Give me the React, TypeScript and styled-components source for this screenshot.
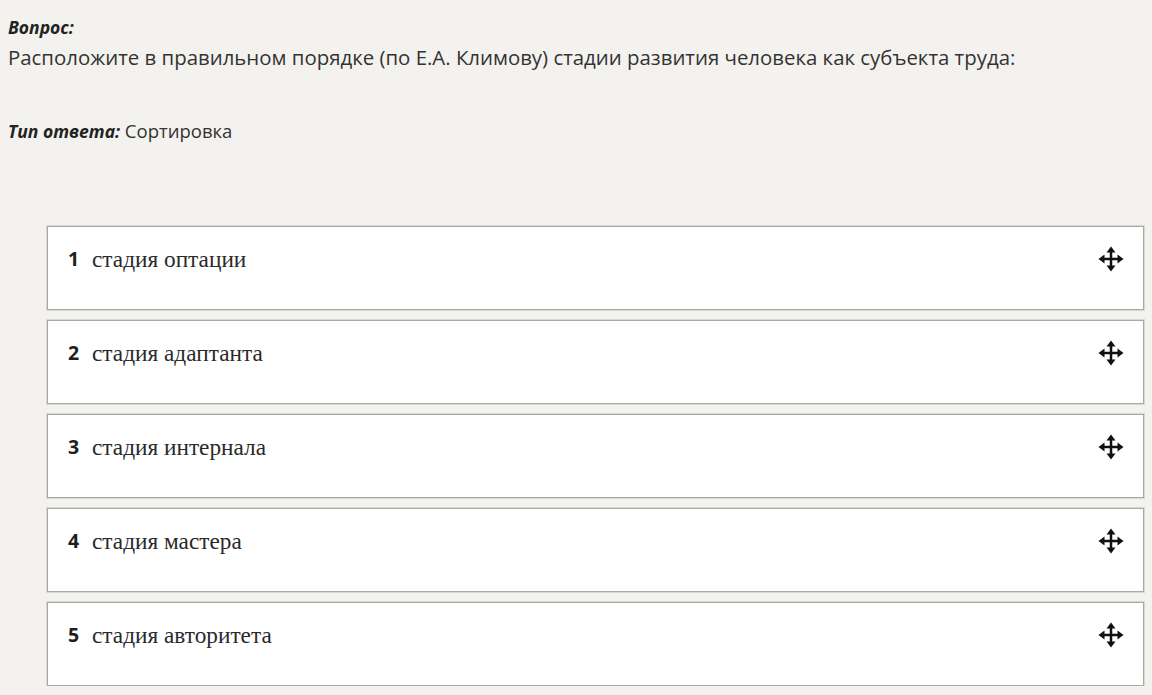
import React from "react";
import styled, { createGlobalStyle } from "styled-components";

const GlobalStyle = createGlobalStyle`
  html, body {
    margin: 0;
    padding: 0;
    background: #f3f2ef;
  }
  body {
    font-family: "Open Sans", "Noto Sans", sans-serif;
    color: #333;
  }
`;

const Page = styled.div`
  padding: 11px 8px 0 8px;
`;

const Label = styled.span`
  font-weight: 700;
  font-style: italic;
  font-size: 17.5px;
  color: #222;
`;

const Line = styled.div`
  font-size: 20.4px;
  line-height: 30px;
`;

const AnswerType = styled.div`
  margin-top: 46px;
  font-size: 18.5px;
  line-height: 26px;
`;

const List = styled.div`
  margin: 82px 0 0 39px;
  display: flex;
  flex-direction: column;
  gap: 10px;
  width: 1097px;
`;

const Item = styled.div`
  display: flex;
  align-items: flex-start;
  height: 84px;
  box-sizing: border-box;
  background: #fff;
  border: 1px solid #a8a8a8;
  box-shadow: 0 0 0 1px #d8d8d8;
  padding: 18px 18px 0 20px;
`;

const Num = styled.span`
  font-weight: 700;
  font-size: 19.5px;
  color: #1e1e1e;
  width: 24px;
`;

const Text = styled.span`
  font-family: "Liberation Serif", "DejaVu Serif", serif;
  font-size: 23.3px;
  color: #2a2a2a;
  flex: 1;
  line-height: 28px;
`;

const Handle = styled.span`
  display: flex;
`;

const MoveIcon = () => (
  <svg width="28" height="28" viewBox="0 0 28 28">
    <g fill="#111">
      <rect x="12.75" y="5" width="2.5" height="18" />
      <rect x="5" y="12.75" width="18" height="2.5" />
      <polygon points="14,1.5 9.5,7.5 18.5,7.5" />
      <polygon points="14,26.5 9.5,20.5 18.5,20.5" />
      <polygon points="1.5,14 7.5,9.5 7.5,18.5" />
      <polygon points="26.5,14 20.5,9.5 20.5,18.5" />
    </g>
  </svg>
);

const stages = [
  "стадия оптации",
  "стадия адаптанта",
  "стадия интернала",
  "стадия мастера",
  "стадия авторитета",
];

const App: React.FC = () => (
  <Page>
    <GlobalStyle />
    <Line>
      <Label>Вопрос:</Label>
    </Line>
    <Line>
      Расположите в правильном порядке (по Е.А. Климову) стадии развития человека как субъекта труда:
    </Line>
    <AnswerType>
      <Label>Тип ответа:</Label> Сортировка
    </AnswerType>
    <List>
      {stages.map((s, i) => (
        <Item key={s}>
          <Num>{i + 1}</Num>
          <Text>{s}</Text>
          <Handle>
            <MoveIcon />
          </Handle>
        </Item>
      ))}
    </List>
  </Page>
);

export default App;
